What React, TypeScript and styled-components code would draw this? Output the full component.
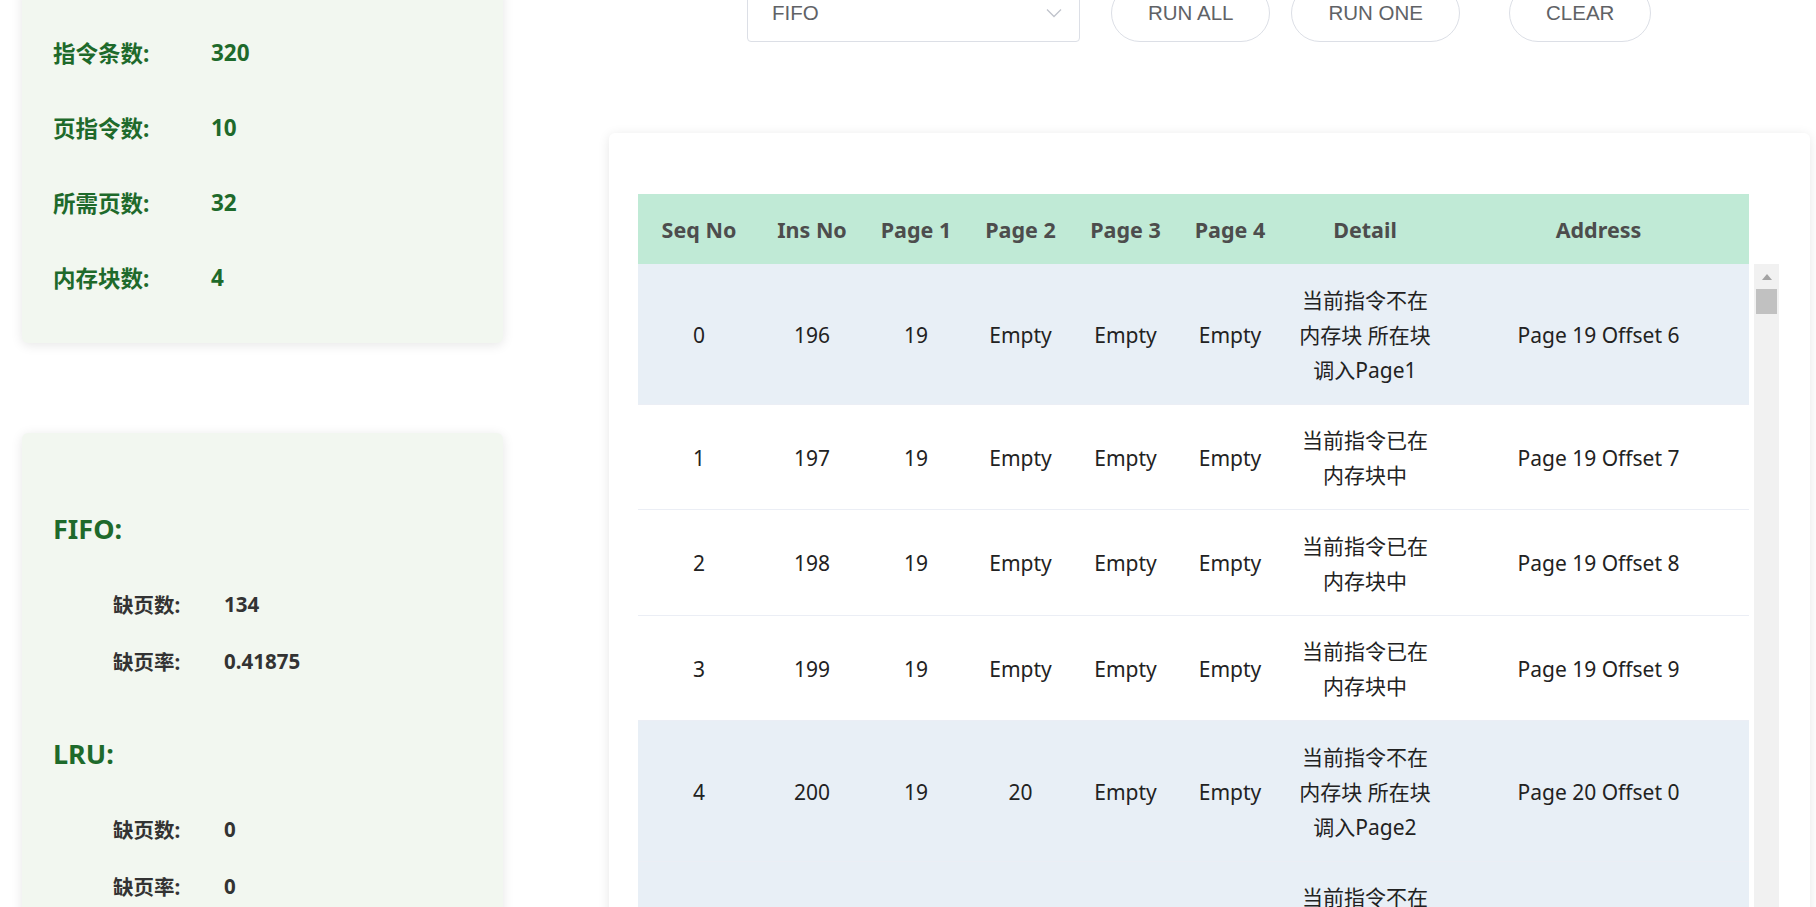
import React from "react";
import styled, { createGlobalStyle } from "styled-components";

const GlobalStyle = createGlobalStyle`
  html, body { margin: 0; padding: 0; background: #ffffff; overflow: hidden; }
  body { font-family: "Noto Sans", "Noto Sans CJK SC", sans-serif; }
  * { box-sizing: border-box; }
`;

const Page = styled.div`
  display: flex;
  align-items: flex-start;
  width: 1816px;
  margin-top: -14px;
  padding-left: 22px;
`;

const LeftColumn = styled.div`
  flex: none;
  width: 481px;
  display: flex;
  flex-direction: column;
  gap: 90px;
`;

const Card = styled.div`
  background: #f2f7f0;
  border-radius: 6px;
  box-shadow: 0 2px 12px rgba(0, 0, 0, 0.1);
`;

const InfoCard = styled(Card)`
  padding: 28.5px 31px;
`;

const InfoRow = styled.div`
  display: flex;
  align-items: center;
  height: 75px;
  font-size: 22.5px;
  font-weight: 700;
  color: #1e6a2b;
`;

const InfoLabel = styled.span`
  width: 158px;
`;

const StatsCard = styled(Card)`
  padding: 60px 31px 40px;
`;

const SectionTitle = styled.div`
  display: flex;
  align-items: center;
  height: 70px;
  font-size: 27px;
  font-weight: 700;
  color: #1e6a2b;
`;

const SubList = styled.div`
  padding: 12.5px 0 28.5px 60px;
`;

const SubRow = styled.div`
  display: flex;
  align-items: center;
  height: 57px;
  font-size: 20.5px;
  font-weight: 700;
  color: #333333;
`;

const SubLabel = styled.span`
  width: 111px;
`;

const RightColumn = styled.div`
  flex: none;
  width: 1201px;
  margin-left: 106px;
  display: flex;
  flex-direction: column;
`;

const Toolbar = styled.div`
  display: flex;
  height: 58px;
  margin-top: -2px;
  padding-left: 138px;
`;

const SelectBox = styled.div`
  width: 333px;
  display: flex;
  align-items: center;
  justify-content: space-between;
  padding: 0 17px 0 24px;
  border: 1px solid #dcdfe6;
  border-radius: 4px;
  background: #ffffff;
  font-family: "Liberation Sans", Arial, sans-serif;
  font-size: 20.5px;
  color: #606266;
`;

const RoundButton = styled.button<{ $ml: number }>`
  margin-left: ${(p) => p.$ml}px;
  padding: 0 36px;
  border: 1px solid #dcdfe6;
  border-radius: 29px;
  background: #ffffff;
  font-family: "Liberation Sans", Arial, sans-serif;
  font-size: 20.5px;
  color: #606266;
`;

const TableCard = styled.div`
  margin-top: 91px;
  height: 900px;
  padding: 61px 31px 0 29px;
  background: #ffffff;
  border-radius: 6px;
  box-shadow: 0 2px 12px rgba(0, 0, 0, 0.1);
`;

const COLS = "122px 104px 104px 105px 105px 104px 166px 301px";

const HeaderRow = styled.div`
  display: grid;
  grid-template-columns: ${COLS};
  align-items: center;
  width: 1111px;
  height: 70px;
  background: #c0ead6;
  font-size: 21.5px;
  font-weight: 700;
  color: #4d4d4d;
  text-align: center;
`;

const BodyArea = styled.div`
  display: flex;
  align-items: stretch;
  gap: 5px;
  height: 800px;
  overflow: hidden;
`;

const BodyRows = styled.div`
  width: 1111px;
  flex: none;
`;

const BodyRow = styled.div<{ $miss: boolean }>`
  display: grid;
  grid-template-columns: ${COLS};
  align-items: center;
  background: ${(p) => (p.$miss ? "#e8eff6" : "#ffffff")};
  border-bottom: 1px solid #ebeef5;
  font-size: 21px;
  line-height: 35px;
  color: #222222;
  text-align: center;
`;

const Cell = styled.div`
  padding: 18.5px 15px 16px;
`;

const ScrollTrack = styled.div`
  width: 25px;
  flex: none;
  background: #f1f1f1;
  display: flex;
  flex-direction: column;
  align-items: center;
  padding-top: 10px;
`;

const ScrollArrow = styled.div`
  width: 0;
  height: 0;
  border-left: 5.5px solid transparent;
  border-right: 5.5px solid transparent;
  border-bottom: 6px solid #a3a3a3;
`;

const ScrollThumb = styled.div`
  width: 21px;
  height: 25px;
  margin-top: 9px;
  background: #c1c1c1;
`;

const ChevronIcon = () => (
  <svg width="16" height="10" viewBox="0 0 16 10" fill="none">
    <path d="M1 1.5 L8 8.5 L15 1.5" stroke="#c0c4cc" strokeWidth="1.3" />
  </svg>
);

const info = [
  ["指令条数:", "320"],
  ["页指令数:", "10"],
  ["所需页数:", "32"],
  ["内存块数:", "4"],
];

const stats = [
  { name: "FIFO:", count: "134", rate: "0.41875" },
  { name: "LRU:", count: "0", rate: "0" },
];

const headers = ["Seq No", "Ins No", "Page 1", "Page 2", "Page 3", "Page 4", "Detail", "Address"];

const MISS = (n: number) => `当前指令不在内存块 所在块调入Page${n}`;
const HIT = "当前指令已在内存块中";

const rows = [
  { miss: true, cells: ["0", "196", "19", "Empty", "Empty", "Empty", MISS(1), "Page 19 Offset 6"] },
  { miss: false, cells: ["1", "197", "19", "Empty", "Empty", "Empty", HIT, "Page 19 Offset 7"] },
  { miss: false, cells: ["2", "198", "19", "Empty", "Empty", "Empty", HIT, "Page 19 Offset 8"] },
  { miss: false, cells: ["3", "199", "19", "Empty", "Empty", "Empty", HIT, "Page 19 Offset 9"] },
  { miss: true, cells: ["4", "200", "19", "20", "Empty", "Empty", MISS(2), "Page 20 Offset 0"] },
  { miss: true, cells: ["5", "33", "19", "20", "3", "Empty", MISS(3), "Page 3 Offset 3"] },
];

export default function App() {
  return (
    <>
      <GlobalStyle />
      <Page>
        <LeftColumn>
          <InfoCard>
            {info.map(([label, value]) => (
              <InfoRow key={label}>
                <InfoLabel>{label}</InfoLabel>
                <span>{value}</span>
              </InfoRow>
            ))}
          </InfoCard>
          <StatsCard>
            {stats.map((s) => (
              <div key={s.name}>
                <SectionTitle>{s.name}</SectionTitle>
                <SubList>
                  <SubRow>
                    <SubLabel>缺页数:</SubLabel>
                    <span>{s.count}</span>
                  </SubRow>
                  <SubRow>
                    <SubLabel>缺页率:</SubLabel>
                    <span>{s.rate}</span>
                  </SubRow>
                </SubList>
              </div>
            ))}
          </StatsCard>
        </LeftColumn>
        <RightColumn>
          <Toolbar>
            <SelectBox>
              <span>FIFO</span>
              <ChevronIcon />
            </SelectBox>
            <RoundButton $ml={31}>RUN ALL</RoundButton>
            <RoundButton $ml={21}>RUN ONE</RoundButton>
            <RoundButton $ml={49}>CLEAR</RoundButton>
          </Toolbar>
          <TableCard>
            <HeaderRow>
              {headers.map((h) => (
                <div key={h}>{h}</div>
              ))}
            </HeaderRow>
            <BodyArea>
              <BodyRows>
                {rows.map((r, i) => (
                  <BodyRow key={i} $miss={r.miss}>
                    {r.cells.map((c, j) => (
                      <Cell key={j}>{c}</Cell>
                    ))}
                  </BodyRow>
                ))}
              </BodyRows>
              <ScrollTrack>
                <ScrollArrow />
                <ScrollThumb />
              </ScrollTrack>
            </BodyArea>
          </TableCard>
        </RightColumn>
      </Page>
    </>
  );
}
